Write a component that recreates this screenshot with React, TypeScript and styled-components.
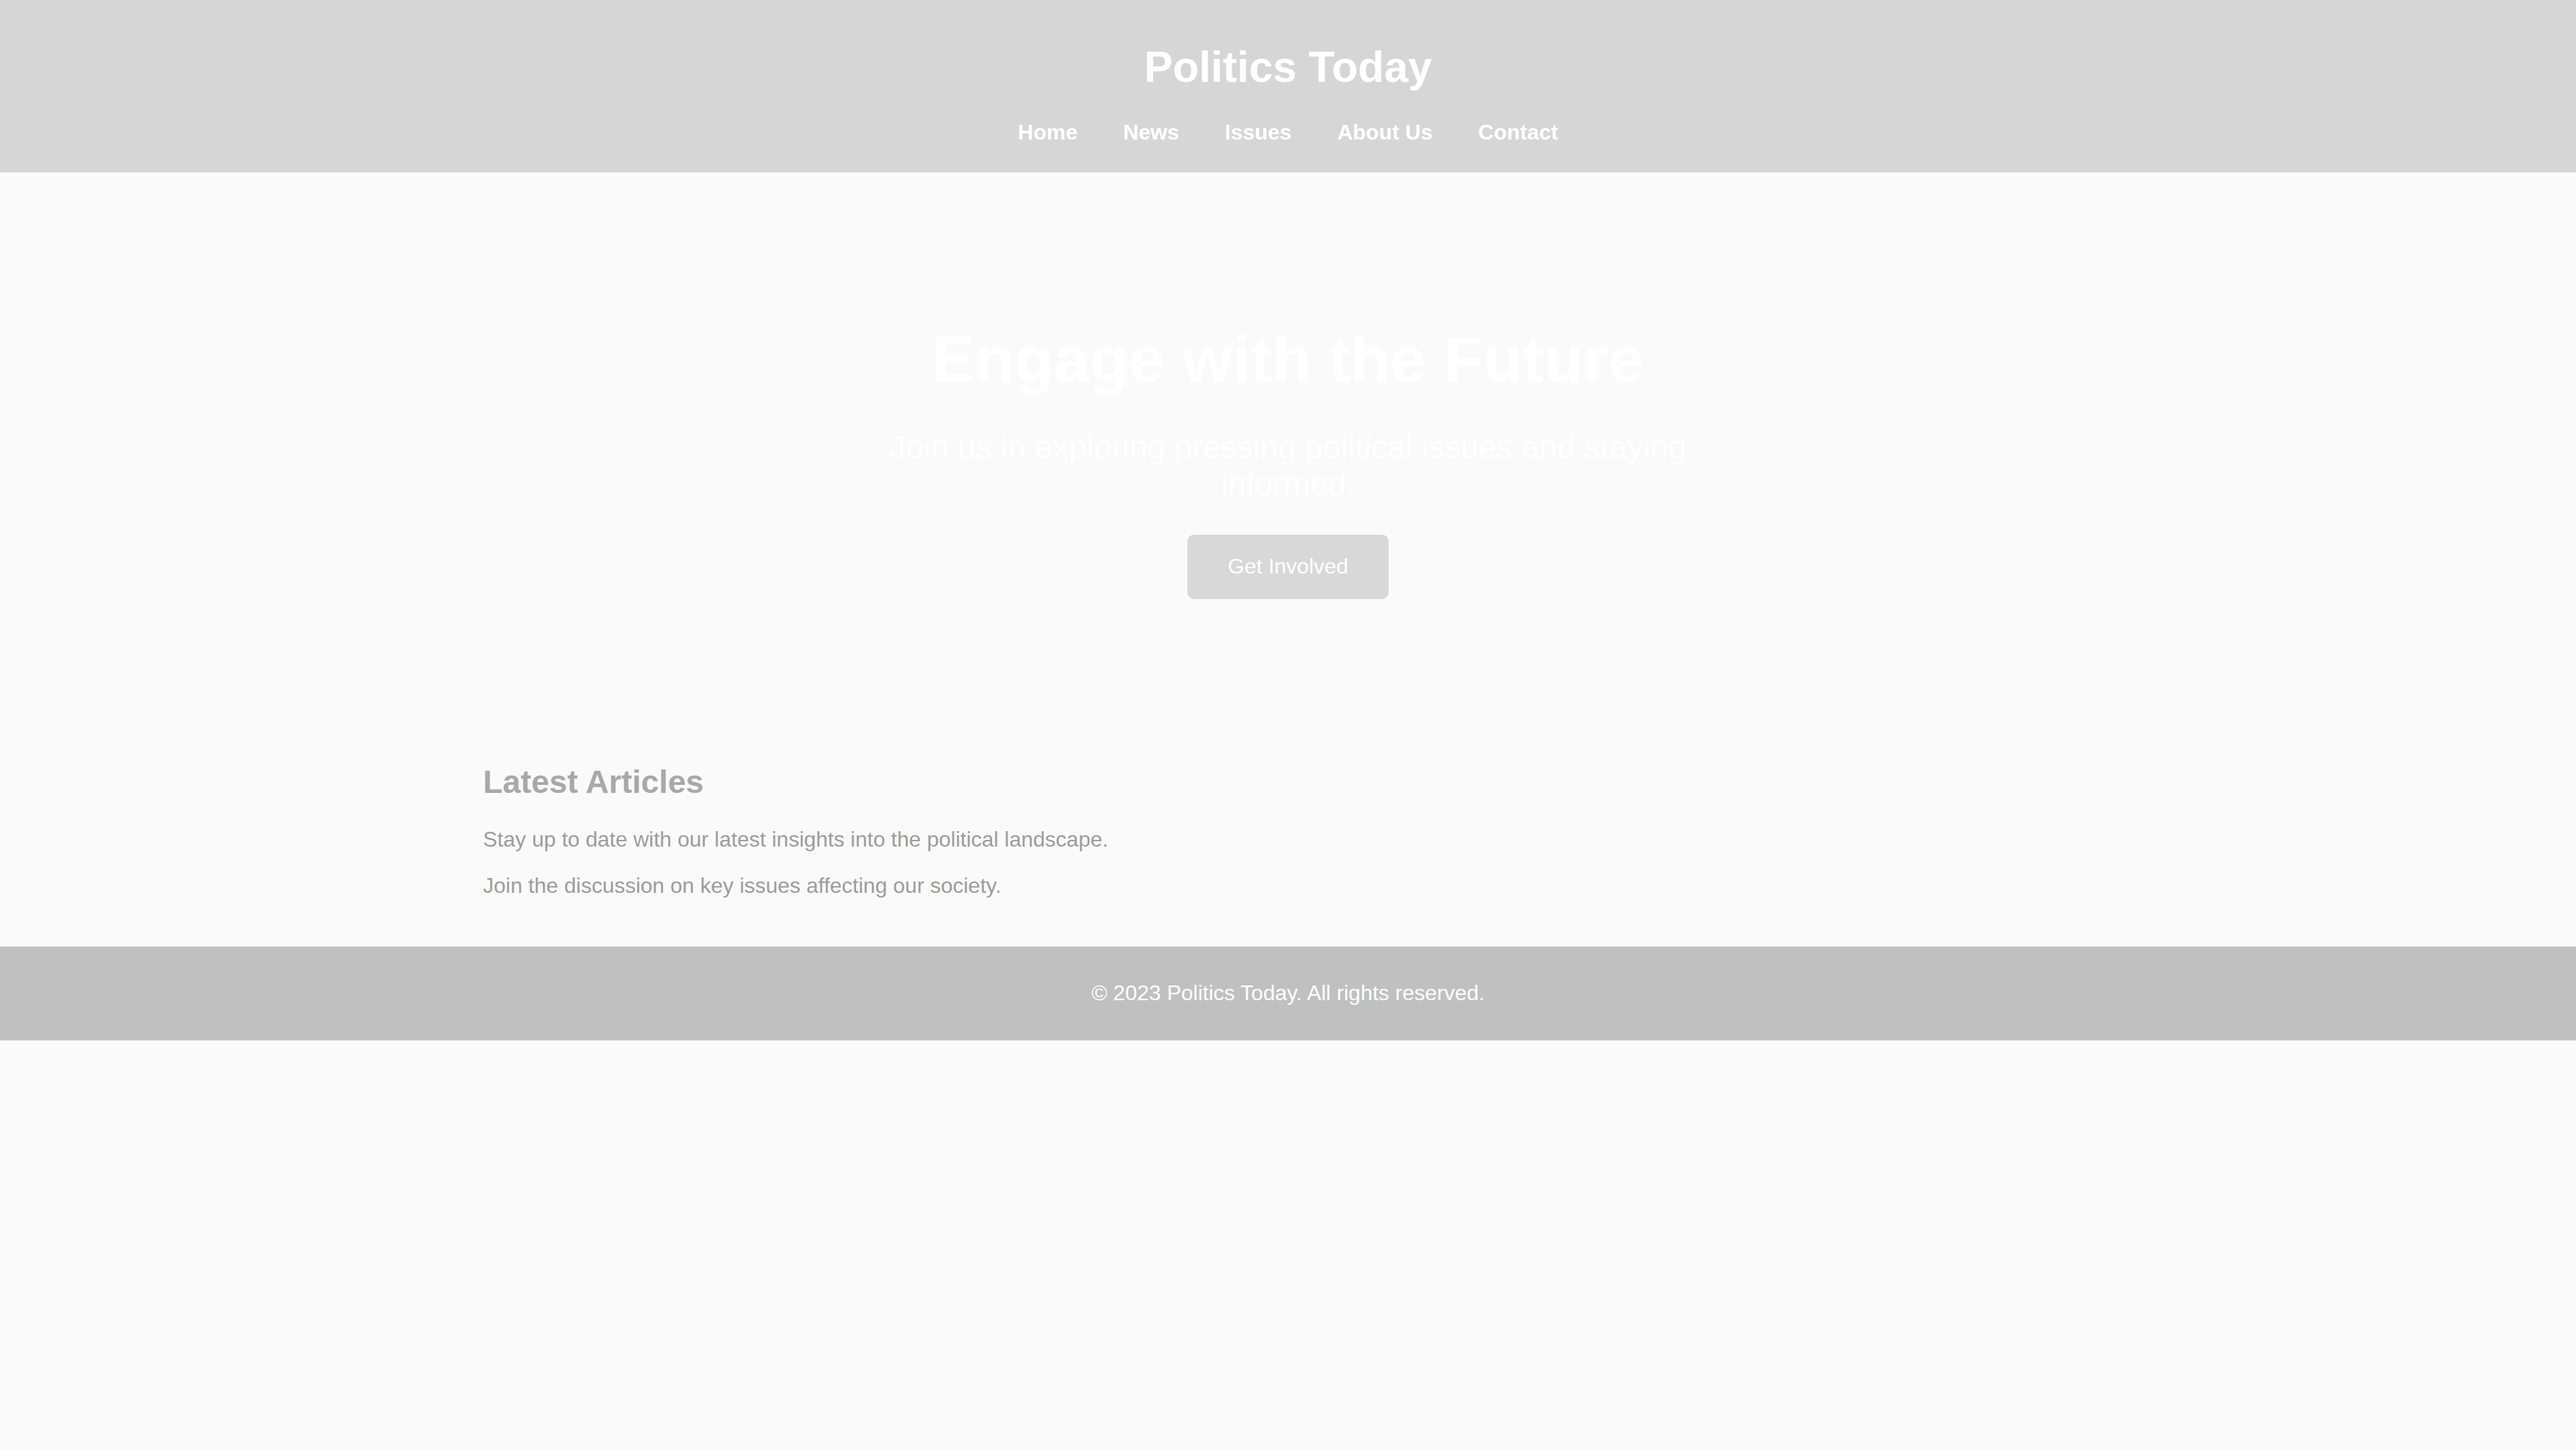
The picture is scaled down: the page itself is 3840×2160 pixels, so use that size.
import React from "react";
import styled, { createGlobalStyle } from "styled-components";

const GlobalStyle = createGlobalStyle`
  html, body {
    margin: 0;
    padding: 0;
    background: #fafafa;
    font-family: "Liberation Sans", Arial, sans-serif;
  }
  * { box-sizing: border-box; }
`;

const Header = styled.header`
  background: #d6d6d6;
  padding: 20px 0 41px;
  text-align: center;
`;

const SiteTitle = styled.h1`
  margin: 43px 0 42px;
  font-size: 64px;
  font-weight: 700;
  color: #ffffff;
  line-height: normal;
`;

const Nav = styled.nav`
  display: flex;
  justify-content: center;
  gap: 68px;
`;

const NavLink = styled.a`
  display: block;
  font-size: 32px;
  font-weight: 700;
  color: #ffffff;
  text-decoration: none;
  line-height: normal;
`;

const Hero = styled.section`
  padding: 160px 0;
  text-align: center;
  display: flex;
  flex-direction: column;
  align-items: center;
`;

const HeroTitle = styled.h2`
  margin: 64px 0 48px;
  font-size: 96px;
  font-weight: 700;
  color: #ffffff;
  line-height: normal;
`;

const HeroText = styled.p`
  margin: 0 0 48px;
  max-width: 1200px;
  font-size: 48px;
  color: #ffffff;
  line-height: normal;
`;

const Button = styled.a`
  display: inline-block;
  padding: 29px 60px 30px;
  background: #d8d8d8;
  border-radius: 10px;
  color: #ffffff;
  font-size: 32px;
  line-height: normal;
  text-decoration: none;
`;

const Articles = styled.section`
  max-width: 2400px;
  margin: 0 auto;
  padding: 45px 0 40px;
`;

const SectionTitle = styled.h3`
  margin: 40px 0;
  font-size: 48px;
  font-weight: 700;
  color: #a8a8a8;
  line-height: normal;
`;

const Paragraph = styled.p`
  margin: 32px 0;
  font-size: 32px;
  color: #9d9d9d;
  line-height: normal;
`;

const Footer = styled.footer`
  background: #c0c0c0;
  padding: 51px 0 52px;
  text-align: center;
`;

const FooterText = styled.p`
  margin: 0;
  font-size: 32px;
  color: #ffffff;
  line-height: normal;
`;

const navItems = ["Home", "News", "Issues", "About Us", "Contact"];

export default function App() {
  return (
    <>
      <GlobalStyle />
      <Header>
        <SiteTitle>Politics Today</SiteTitle>
        <Nav>
          {navItems.map((item) => (
            <NavLink key={item} href="#">
              {item}
            </NavLink>
          ))}
        </Nav>
      </Header>
      <Hero>
        <HeroTitle>Engage with the Future</HeroTitle>
        <HeroText>
          Join us in exploring pressing political issues and staying informed.
        </HeroText>
        <Button href="#">Get Involved</Button>
      </Hero>
      <Articles>
        <SectionTitle>Latest Articles</SectionTitle>
        <Paragraph>
          Stay up to date with our latest insights into the political landscape.
        </Paragraph>
        <Paragraph>Join the discussion on key issues affecting our society.</Paragraph>
      </Articles>
      <Footer>
        <FooterText>© 2023 Politics Today. All rights reserved.</FooterText>
      </Footer>
    </>
  );
}
